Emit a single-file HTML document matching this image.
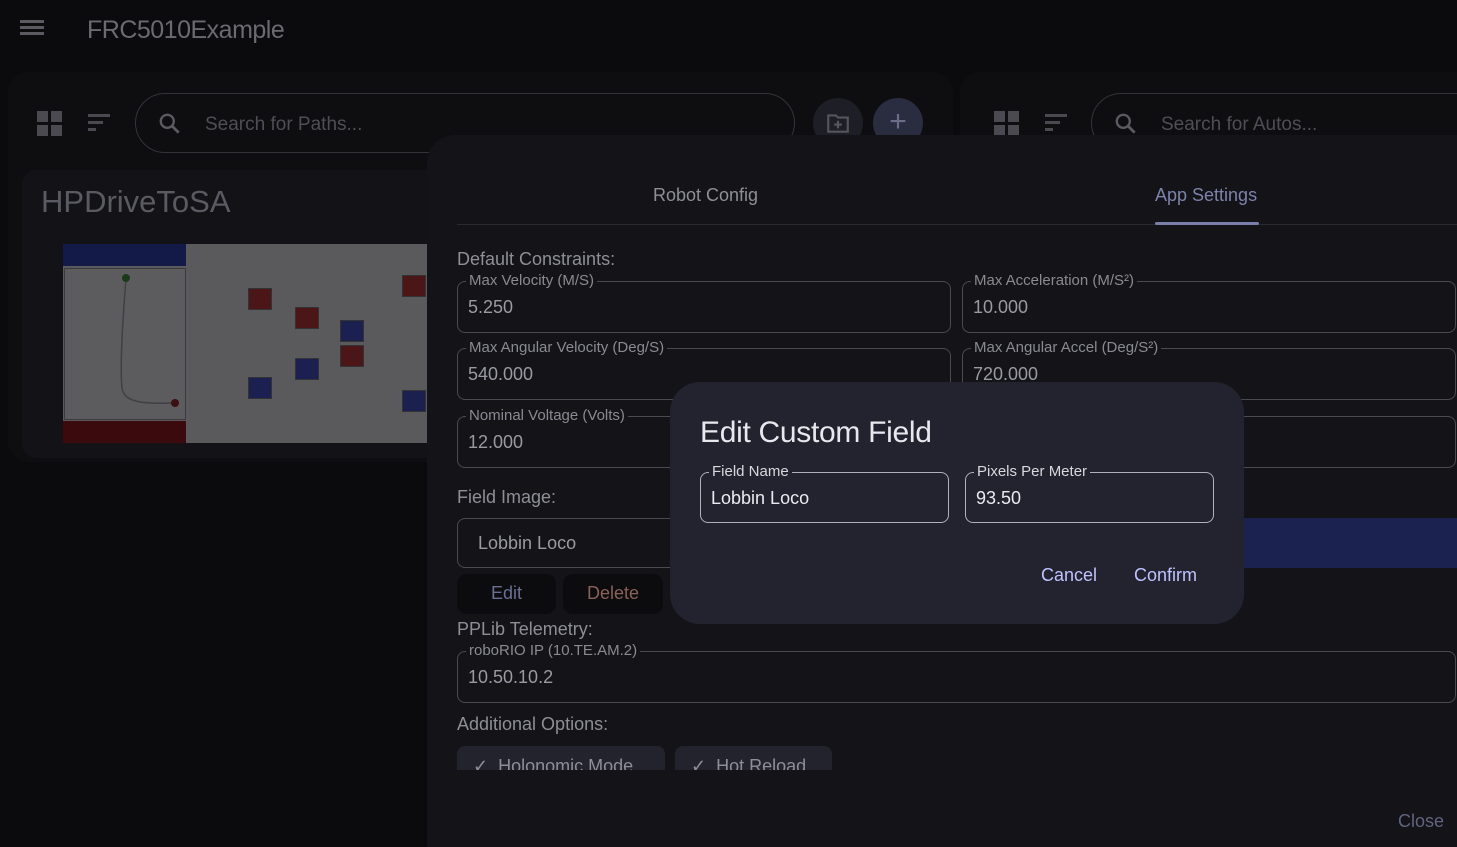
<!DOCTYPE html>
<html style="overflow:hidden;width:1457px;height:847px"><head><style>
*{box-sizing:border-box;margin:0;padding:0}
body{width:1457px;height:847px;background:#0b0b0d;font-family:"Liberation Sans",sans-serif;position:relative;overflow:hidden;color:#c8c8d0}
.a{position:absolute}
.fld{position:absolute;border:1.5px solid #4a4a52;border-radius:8px}
.fld .l{position:absolute;top:-9px;left:8px;background:#131318;padding:0 3px;font-size:15px;color:#8a8a92;line-height:16px}
.fld .v{position:absolute;left:10px;top:15px;font-size:18px;color:#9a9aa2}
.h{font-size:18px;color:#8e8e96}
.x{position:absolute;width:24px;height:22px;border:1px solid #333}
</style></head><body>
<div class="a" style="left:20px;top:20px;width:24px;height:3px;background:#5a5a60;box-shadow:0 6px 0 #5a5a60,0 12px 0 #5a5a60"></div>
<div class="a" style="left:87px;top:16px;font-size:25px;color:#6a6a70;letter-spacing:-0.5px">FRC5010Example</div>
<div class="a" style="left:8px;top:72px;width:945px;height:390px;background:#0e0e11;border-radius:20px"></div>
<div class="a" style="left:960px;top:72px;width:520px;height:80px;background:#0e0e11;border-radius:20px"></div>
<div class="a" style="left:37px;top:111px;width:25px;height:25px;background:
linear-gradient(#4a4a50,#4a4a50) 0 0/11px 11px no-repeat,linear-gradient(#4a4a50,#4a4a50) 14px 0/11px 11px no-repeat,linear-gradient(#4a4a50,#4a4a50) 0 14px/11px 11px no-repeat,linear-gradient(#4a4a50,#4a4a50) 14px 14px/11px 11px no-repeat"></div>
<div class="a" style="left:994px;top:111px;width:25px;height:25px;background:
linear-gradient(#4a4a50,#4a4a50) 0 0/11px 11px no-repeat,linear-gradient(#4a4a50,#4a4a50) 14px 0/11px 11px no-repeat,linear-gradient(#4a4a50,#4a4a50) 0 14px/11px 11px no-repeat,linear-gradient(#4a4a50,#4a4a50) 14px 14px/11px 11px no-repeat"></div>
<div class="a" style="left:88px;top:114px;width:22px;height:3px;background:#4a4a50"></div>
<div class="a" style="left:88px;top:121px;width:15px;height:3px;background:#4a4a50"></div>
<div class="a" style="left:88px;top:128px;width:8px;height:3px;background:#4a4a50"></div>
<div class="a" style="left:1045px;top:114px;width:22px;height:3px;background:#4a4a50"></div>
<div class="a" style="left:1045px;top:121px;width:15px;height:3px;background:#4a4a50"></div>
<div class="a" style="left:1045px;top:128px;width:8px;height:3px;background:#4a4a50"></div>
<div class="a" style="left:135px;top:93px;width:660px;height:60px;border:1.5px solid #333338;border-radius:30px"></div>
<div class="a" style="left:1091px;top:93px;width:400px;height:60px;border:1.5px solid #333338;border-radius:30px"></div>
<svg class="a" style="left:157px;top:111px" width="26" height="26" viewBox="0 0 24 24"><circle cx="9.5" cy="9.5" r="6" fill="none" stroke="#5a5a60" stroke-width="2.2"/><path d="M14 14l6 6" stroke="#5a5a60" stroke-width="2.6"/></svg>
<svg class="a" style="left:1113px;top:111px" width="26" height="26" viewBox="0 0 24 24"><circle cx="9.5" cy="9.5" r="6" fill="none" stroke="#5a5a60" stroke-width="2.2"/><path d="M14 14l6 6" stroke="#5a5a60" stroke-width="2.6"/></svg>
<div class="a" style="left:205px;top:114px;font-size:19px;color:#4e4e54">Search for Paths...</div>
<div class="a" style="left:1161px;top:114px;font-size:19px;color:#4e4e54">Search for Autos...</div>
<div class="a" style="left:813px;top:98px;width:50px;height:50px;border-radius:25px;background:#1e1f26"></div>
<svg class="a" style="left:825px;top:110px" width="26" height="26" viewBox="0 0 24 24"><path d="M3 5h7l2 2h9v13H3z" fill="none" stroke="#55555c" stroke-width="2"/><path d="M12 10v7M8.5 13.5h7" stroke="#55555c" stroke-width="2"/></svg>
<div class="a" style="left:873px;top:98px;width:50px;height:50px;border-radius:25px;background:#2a2d40;color:#6a6e88;font-size:30px;text-align:center;line-height:48px">+</div>
<div class="a" style="left:22px;top:170px;width:420px;height:288px;background:#131317;border-radius:14px"></div>
<div class="a" style="left:41px;top:184px;font-size:31px;color:#5a5a62">HPDriveToSA</div>
<div class="a" style="left:63px;top:244px;width:364px;height:199px;background:#5a5a5c"></div>
<div class="a" style="left:63px;top:244px;width:123px;height:22px;background:#141a48"></div>
<div class="a" style="left:63px;top:421px;width:123px;height:22px;background:#3a0a0c"></div>
<div class="a" style="left:64px;top:268px;width:122px;height:152px;border:1px solid #3a3a40;background:#5c5c5e"></div>
<svg class="a" style="left:64px;top:268px" width="122" height="152"><path d="M62 10 C58 60 56 100 58 120 C60 135 80 136 112 135" fill="none" stroke="#404044" stroke-width="1.5"/><circle cx="62" cy="10" r="4" fill="#1a3a1a"/><circle cx="111" cy="135" r="4" fill="#3a1010"/></svg>
<div class="x" style="left:248px;top:288px;background:#4a1618"></div>
<div class="x" style="left:402px;top:275px;background:#4a1618"></div>
<div class="x" style="left:295px;top:307px;background:#4a1618"></div>
<div class="x" style="left:340px;top:320px;background:#1c2050"></div>
<div class="x" style="left:340px;top:345px;background:#4a1618"></div>
<div class="x" style="left:295px;top:358px;background:#1c2050"></div>
<div class="x" style="left:248px;top:377px;background:#1c2050"></div>
<div class="x" style="left:402px;top:390px;background:#1c2050"></div>

<div class="a" style="left:427px;top:135px;width:1060px;height:712px;background:#131318;border-radius:28px 0 0 0"></div>
<div class="a" style="left:653px;top:185px;font-size:18px;color:#8e8e96">Robot Config</div>
<div class="a" style="left:1155px;top:185px;font-size:18px;color:#7d82aa">App Settings</div>
<div class="a" style="left:457px;top:224px;width:1000px;height:1px;background:#2a2a30"></div>
<div class="a" style="left:1155px;top:222px;width:104px;height:3px;background:#7a7eaa;border-radius:2px"></div>
<div class="a h" style="left:457px;top:249px">Default Constraints:</div>
<div class="fld" style="left:457px;top:281px;width:494px;height:52px"><span class="l">Max Velocity (M/S)</span><span class="v">5.250</span></div>
<div class="fld" style="left:962px;top:281px;width:494px;height:52px"><span class="l">Max Acceleration (M/S²)</span><span class="v">10.000</span></div>
<div class="fld" style="left:457px;top:348px;width:494px;height:52px"><span class="l">Max Angular Velocity (Deg/S)</span><span class="v">540.000</span></div>
<div class="fld" style="left:962px;top:348px;width:494px;height:52px"><span class="l">Max Angular Accel (Deg/S²)</span><span class="v">720.000</span></div>
<div class="fld" style="left:457px;top:416px;width:494px;height:52px"><span class="l">Nominal Voltage (Volts)</span><span class="v">12.000</span></div>
<div class="fld" style="left:962px;top:416px;width:494px;height:52px"></div>
<div class="a h" style="left:457px;top:487px">Field Image:</div>
<div class="fld" style="left:457px;top:518px;width:300px;height:50px"><span class="v" style="left:20px;top:14px">Lobbin Loco</span></div>
<div class="a" style="left:1230px;top:518px;width:240px;height:50px;background:#1c2250;border-radius:10px"></div>
<div class="a" style="left:457px;top:574px;width:99px;height:40px;background:#0c0c0f;border-radius:10px;color:#6a6e95;font-size:18px;text-align:center;line-height:38px">Edit</div>
<div class="a" style="left:563px;top:574px;width:100px;height:40px;background:#0c0c0f;border-radius:10px;color:#8a6058;font-size:18px;text-align:center;line-height:38px">Delete</div>
<div class="a h" style="left:457px;top:619px">PPLib Telemetry:</div>
<div class="fld" style="left:457px;top:651px;width:999px;height:52px"><span class="l">roboRIO IP (10.TE.AM.2)</span><span class="v">10.50.10.2</span></div>
<div class="a h" style="left:457px;top:714px">Additional Options:</div>
<div class="a" style="left:457px;top:746px;width:208px;height:24px;background:#22232c;border-radius:8px 8px 0 0;overflow:hidden;color:#8e8e96;font-size:18px;padding:10px 0 0 16px;line-height:20px">✓ &nbsp;Holonomic Mode</div>
<div class="a" style="left:675px;top:746px;width:157px;height:24px;background:#22232c;border-radius:8px 8px 0 0;overflow:hidden;color:#8e8e96;font-size:18px;padding:10px 0 0 16px;line-height:20px">✓ &nbsp;Hot Reload</div>
<div class="a" style="left:1398px;top:811px;font-size:18px;color:#60647e">Close</div>

<div class="a" style="left:670px;top:382px;width:574px;height:242px;background:#22232f;border-radius:30px"></div>
<div class="a" style="left:700px;top:416px;font-size:30px;color:#e8e8ee;letter-spacing:-0.3px">Edit Custom Field</div>
<div class="fld" style="left:700px;top:472px;width:249px;height:51px;border-color:#b0b0b8"><span class="l" style="background:#22232f;color:#d8d8de">Field Name</span><span class="v" style="color:#eaeaf0">Lobbin Loco</span></div>
<div class="fld" style="left:965px;top:472px;width:249px;height:51px;border-color:#b0b0b8"><span class="l" style="background:#22232f;color:#d8d8de">Pixels Per Meter</span><span class="v" style="color:#eaeaf0">93.50</span></div>
<div class="a" style="left:1041px;top:565px;font-size:18px;color:#bfc2ff">Cancel</div>
<div class="a" style="left:1134px;top:565px;font-size:18px;color:#bfc2ff">Confirm</div>
</body></html>
